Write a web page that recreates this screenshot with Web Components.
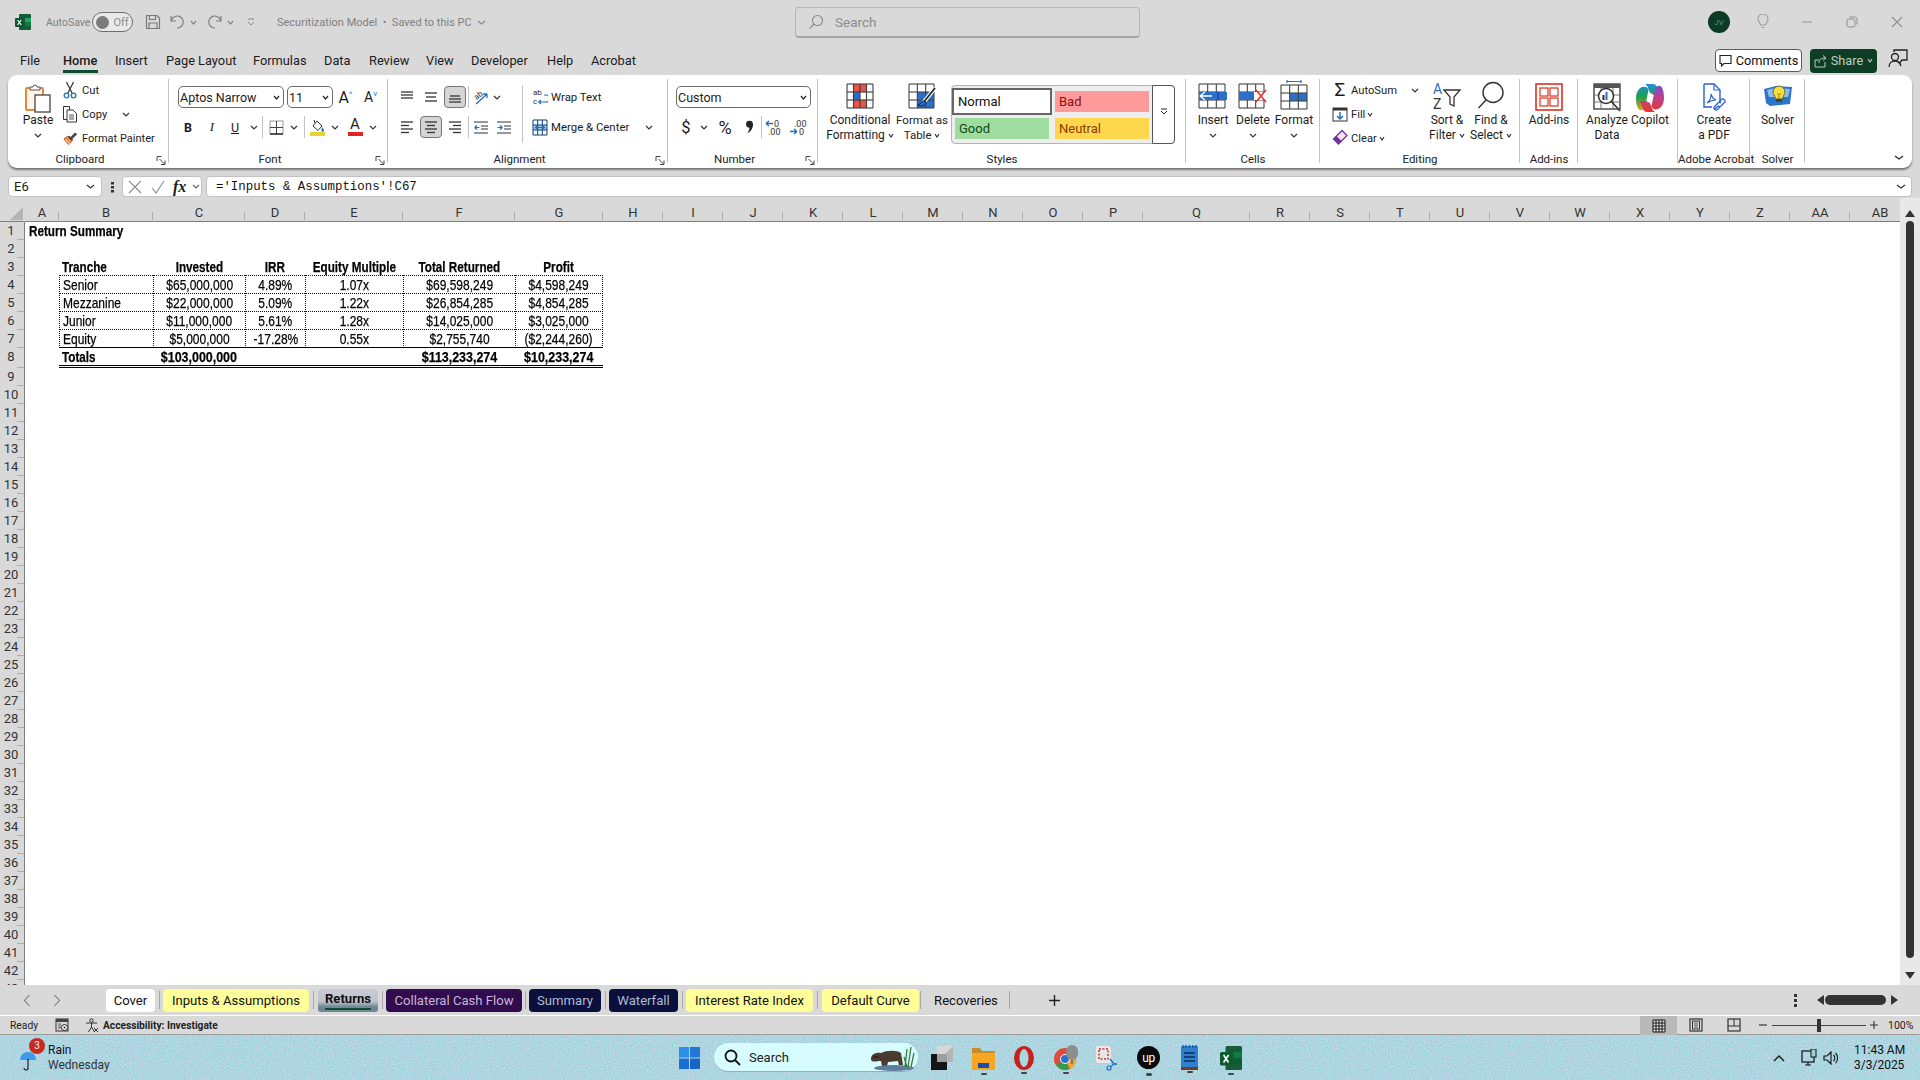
<!DOCTYPE html>
<html lang="en"><head><meta charset="utf-8"><title>Securitization Model</title>
<style>
html,body{margin:0;padding:0;height:1080px;width:1920px;overflow:hidden;background:#d9d9d9;font-family:Roboto,"Liberation Sans",sans-serif;}
body{display:flex;flex-direction:column}
</style></head><body>
<x-titlebar></x-titlebar>
<x-menubar></x-menubar>
<x-ribbon></x-ribbon>
<x-formula></x-formula>
<x-sheet></x-sheet>
<x-sheettabs></x-sheettabs>
<x-status></x-status>
<x-taskbar></x-taskbar>
<script>
const sv=(w,h,inner,attr='')=>`<svg width="${w}" height="${h}" viewBox="0 0 ${w} ${h}" ${attr}>${inner}</svg>`;
const chev=(c='#333',w=8)=>sv(w,5,`<path d="M1 1l${w/2-1} 3 ${w/2-1}-3" fill="none" stroke="${c}" stroke-width="1.2"/>`,'class="chv"');
const excelIcon=(s=16)=>`<svg width="${s}" height="${s}" viewBox="0 0 16 16"><rect x="4" y="0" width="12" height="16" rx="1" fill="#185c37"/><rect x="10" y="4" width="6" height="4" fill="#21a366"/><rect x="10" y="8" width="6" height="4" fill="#107c41"/><rect x="0" y="4" width="9" height="9" rx="1" fill="#0b5a30"/><path d="M2.6 6l3.6 5M6.2 6l-3.6 5" stroke="#fff" stroke-width="1.2"/></svg>`;
function def(name,css,html,extra){
  customElements.define(name,class extends HTMLElement{
    constructor(){super();const r=this.attachShadow({mode:'open'});
      r.innerHTML=`<style>${css}</style>${typeof html==='function'?html(this):html}`;}
    connectedCallback(){ if(extra) extra(this); }
  });
}

/* ---------- title bar ---------- */
def('x-titlebar',`
:host{display:flex;align-items:center;height:44px;flex:none;color:#808080;font-size:12px}
.i{display:flex;align-items:center;justify-content:center;flex:none}
.tog{width:41px;height:20px;box-sizing:border-box;border:1.5px solid #6e6e6e;border-radius:10px;background:#e9e9e9;display:flex;align-items:center;padding:0 3px;gap:4px;font-size:11px;color:#8a8a8a}
.tog b{width:13px;height:13px;border-radius:50%;background:#7b7b7b;flex:none}
.search{width:345px;height:31px;flex:none;box-sizing:border-box;border:1px solid #b5b5b5;border-bottom:2px solid #a5a5a5;border-radius:4px;display:flex;align-items:center;padding-left:12px;gap:11px;color:#8b8b8b;font-size:13.5px}
.av{width:22px;height:22px;border-radius:50%;background:#0b3b24;color:#4d9b6e;font-size:8px;display:flex;align-items:center;justify-content:center}
`,`
<span class="i" style="margin-left:15px;width:16px">${excelIcon()}</span>
<span style="margin-left:15px;width:46px;font-size:10.5px;flex:none">AutoSave</span>
<span class="i tog"><b></b>Off</span>
<span class="i" style="margin-left:12px;width:16px">${sv(16,16,`<path d="M1.5 1.5h10.5l2.5 2.5v10.5h-13z" fill="none" stroke="#7a7a7a" stroke-width="1.2"/><path d="M4.5 1.5v4h6v-4M4 14.5v-5.5h8v5.500" fill="none" stroke="#7a7a7a" stroke-width="1.2"/>`)}</span>
<span class="i" style="margin-left:8px;width:16px">${sv(16,16,`<path d="M2 2v5h5M2.4 6.6A6 6 0 1 1 8 14" fill="none" stroke="#7f7f7f" stroke-width="1.2"/>`)}</span>
<span class="i" style="margin-left:3px;width:10px">${chev('#888',7)}</span>
<span class="i" style="margin-left:9px;width:16px">${sv(16,16,`<path d="M14 2v5h-5M13.6 6.6A6 6 0 1 0 8 14" fill="none" stroke="#7f7f7f" stroke-width="1.2"/>`)}</span>
<span class="i" style="margin-left:2px;width:10px">${chev('#888',7)}</span>
<span class="i" style="margin-left:11px;width:10px">${sv(8,8,`<path d="M1 1h6M1 4l3 3 3-3" fill="none" stroke="#888" stroke-width="1"/>`)}</span>
<span style="margin-left:21px;width:199px;white-space:nowrap;font-size:11px;flex:none">Securitization Model &nbsp;•&nbsp; Saved to this PC</span>
<span class="i" style="width:10px">${chev('#888',9)}</span>
<span style="width:309px;flex:none"></span>
<span class="search">${sv(16,16,`<circle cx="9.5" cy="6.5" r="5" fill="none" stroke="#8a8a8a" stroke-width="1.1"/><path d="M6 10l-4.5 4.5" stroke="#8a8a8a" stroke-width="1.1"/>`)}<span>Search</span></span>
<span style="width:568px;flex:none"></span>
<span class="i av">JV</span>
<span class="i" style="margin-left:26px;width:14px">${sv(12,16,`<path d="M3.5 11c0-2-2.5-3-2.5-6a5 5 0 0 1 10 0c0 3-2.500 4-2.500 6zM4.500 13.500h3" fill="none" stroke="#a0a0a0" stroke-width="1.100"/>`)}</span>
<span class="i" style="margin-left:30px;width:14px">${sv(12,2,`<path d="M1 1h10" stroke="#a0a0a0" stroke-width="1.200"/>`)}</span>
<span class="i" style="margin-left:31px;width:14px">${sv(12,12,`<rect x="1" y="3" width="8" height="8" rx="2" fill="none" stroke="#8f8f8f"/><path d="M3.500 1h5a2.500 2.500 0 0 1 2.500 2.500v5" fill="none" stroke="#8f8f8f"/>`)}</span>
<span class="i" style="margin-left:31px;width:14px">${sv(12,12,`<path d="M1 1l10 10M11 1l-10 10" stroke="#8f8f8f" stroke-width="1.100"/>`)}</span>
`);

/* ---------- menu bar ---------- */
const menu=[['File',43],['Home',52],['Insert',51],['Page Layout',87],['Formulas',71],['Data',45],['Review',57],['View',45],['Developer',76],['Help',44],['Acrobat',60]];
def('x-menubar',`
:host{display:flex;align-items:center;height:31px;flex:none;padding-left:20px;padding-top:2px;font-size:12.800px;color:#1c1c1c;box-sizing:border-box}
span.t{flex:none;white-space:nowrap;line-height:18px;position:relative}
.on{font-weight:500}
.on::after{content:"";position:absolute;left:0;width:35px;bottom:-3px;height:2.500px;background:#0e4b31}
.cm{margin-left:1064px;width:87px;height:23px;box-sizing:border-box;border:1px solid #5c5c5c;border-radius:4px;background:#fff;display:flex;align-items:center;justify-content:center;gap:4px;color:#111;flex:none}
.sh{margin-left:8px;width:67px;height:24px;box-sizing:border-box;border-radius:4px;background:#0d3d25;color:#b9cdbd;display:flex;align-items:center;justify-content:center;gap:4px;flex:none}
`,`
${menu.map(([t,w])=>`<span class="t ${t==='Home'?'on':''}" style="width:${w}px">${t}</span>`).join('')}
<span class="cm">${sv(13,13,`<path d="M1 1.500h11v8H5l-2.500 2.500V9.500H1z" fill="none" stroke="#222" stroke-width="1.100"/>`)}Comments</span>
<span class="sh">${sv(13,14,`<path d="M1 6h4M1 6v7h10V8M5 9c0-4 3-5 6-5M9 1.500l3 2.500-3 2.500" fill="none" stroke="#b9cdbd"/>`)}Share ${chev('#b9cdbd',6)}</span>
<span style="margin-left:11px;flex:none">${sv(20,20,`<circle cx="7" cy="8" r="3.500" fill="none" stroke="#222" stroke-width="1.300"/><path d="M1 18c0-4 3-6 6-6s5 2 6 5" fill="none" stroke="#222" stroke-width="1.300"/><path d="M6 3V1h13v10h-5l-2.500 3" fill="none" stroke="#222" stroke-width="1.300"/>`)}</span>
`);

/* ---------- ribbon group + big button ---------- */
def('x-group',`
:host{display:flex;flex-direction:column;height:93px;box-sizing:border-box;padding-top:3px;flex:none;background:linear-gradient(#c4c4c4,#c4c4c4) right 4px/1.500px 84px no-repeat}
.c{height:73px;display:flex;flex:none}
.l{height:15px;display:flex;align-items:center;font-size:11.500px;color:#222}
.l span{flex:1;text-align:center;white-space:nowrap}
.la{display:none;width:10px;margin-right:3px;flex:none;margin-top:3px}
:host([launch]) .la{display:block}
:host([launch]) .l span{padding-right:4px}
`,h=>`<div class="c"><slot></slot></div><div class="l"><span>${h.getAttribute('label')||''}</span><svg class="la" width="9" height="9" viewBox="0 0 9 9"><path d="M.5 5V.5H5M3 3l5 5M8.500 4.500v4h-4" fill="none" stroke="#444"/></svg></div>`);
def('x-big',`
:host{display:flex;flex-direction:column;align-items:center;flex:none;margin-top:5px;font-size:12px;line-height:15px;color:#1c1c1c;text-align:center;white-space:nowrap}
.ic{height:30px;display:flex;align-items:flex-start;justify-content:center}
`,`<div class="ic"><slot name="icon"></slot></div><div><slot></slot></div>`);

/* ---------- ribbon ---------- */
const bl=(ys,col='#333')=>sv(16,16,ys.map(([y,x1,x2])=>`<path d="M${x1} ${y}H${x2}" stroke="${col}" stroke-width="1.300"/>`).join(''));
const grid=(w,h,cols,rows,fills='',c='#3c3c3c')=>{let s=fills;for(let i=0;i<=cols;i++){const x=1+i*(w-2)/cols;s+=`<path d="M${x} 1V${h-1}" stroke="${c}" stroke-width="1.100"/>`}for(let j=0;j<=rows;j++){const y=1+j*(h-2)/rows;s+=`<path d="M1 ${y}H${w-1}" stroke="${c}" stroke-width="1.100"/>`}return s};
const ICON={
paste:`<svg slot="icon" width="28" height="30" viewBox="0 0 28 30"><rect x="2" y="5" width="17" height="22" rx="1" fill="#fff6e8" stroke="#e5873a" stroke-width="2"/><path d="M6 7V4h3a2 2 0 0 1 4 0h3v3z" fill="#fff" stroke="#555"/><rect x="11" y="12" width="15" height="17" fill="#fff" stroke="#444" stroke-width="1.300"/></svg>`,
cut:sv(14,18,`<path d="M3.500 1l6 12M10.500 1l-6 12" stroke="#333" stroke-width="1.200"/><circle cx="3.500" cy="14.500" r="2.300" fill="none" stroke="#1f6fc0" stroke-width="1.300"/><circle cx="10.500" cy="14.500" r="2.300" fill="none" stroke="#1f6fc0" stroke-width="1.300"/>`),
copy:sv(16,18,`<path d="M1.500 1.500h6v13h-6z" fill="#fff" stroke="#333"/><path d="M5 5h6l3.500 3.500v8.500H5z" fill="#fff" stroke="#333"/><path d="M7 10h5M7 12h5M7 14h5" stroke="#555"/>`),
painter:sv(17,17,`<path d="M2 9l5 6 4-4-5-5z" fill="#ef8f3a" stroke="#c9501f"/><path d="M4 10l4 4" stroke="#fff"/><path d="M9 7l5-5 2 2-5 5z" fill="#444"/><path d="M7 6l4 4" stroke="#222" stroke-width="1.500"/>`),
borders:sv(15,15,`<rect x="1" y="1" width="13" height="13" fill="none" stroke="#9a9a9a"/><path d="M7.500 1v13M1 7.500h13" stroke="#444"/><path d="M1 14h13" stroke="#222" stroke-width="1.400"/>`),
fill:sv(17,18,`<path d="M4 8l4-5 5 5-4 4.500z" fill="#fff" stroke="#333"/><path d="M6 5l-1-3" stroke="#333"/><path d="M13 9c1 1.500 2 2.500 2 3.500a1.300 1.300 0 0 1-2.600 0c0-1 .600-2 .600-3.500z" fill="#1f6fc0"/><rect x="1" y="14" width="15" height="4" fill="#e4d334"/>`),
fcolor:`<span style="display:flex;flex-direction:column;align-items:center;font-size:15px;line-height:13px;color:#222;width:16px">A<i style="display:block;width:15px;height:4px;background:#e32222;margin-top:1px"></i></span>`,
orient:sv(17,17,`<text x="2" y="9" font-family="Roboto" font-size="8" fill="#333" transform="rotate(-40 6 8)">ab</text><path d="M3 15L14 5M14 5h-4M14 5v4" stroke="#1f6fc0" stroke-width="1.300" fill="none"/>`),
wrap:sv(15,18,`<text x="0" y="7" font-family="Roboto" font-size="8" fill="#333">ab</text><text x="0" y="16" font-family="Roboto" font-size="8" fill="#333">c</text><path d="M11 7h2a1.500 1.500 0 0 1 0 7H6M8 12l-2.200 2 2.200 2" fill="none" stroke="#1f6fc0" stroke-width="1.200"/>`),
merge:sv(16,17,grid(16,17,3,3,`<rect x="1" y="6" width="14" height="5" fill="#a7cbed"/>`,'#1c4f86')+`<path d="M3 8.500h10M3 8.500l2-1.500M3 8.500l2 1.500M13 8.500l-2-1.500M13 8.500l-2 1.500" stroke="#1f6fc0" fill="none"/>`),
outd:sv(16,15,`<path d="M1 2h14M8 6h7M8 9h7M1 13h14" stroke="#333"/><path d="M6.500 7.500H1.500M1.500 7.500l2.500-2M1.500 7.500l2.500 2" stroke="#1f6fc0" stroke-width="1.200" fill="none"/>`),
ind:sv(16,15,`<path d="M1 2h14M8 6h7M8 9h7M1 13h14" stroke="#333"/><path d="M1.500 7.500h5M6.500 7.500L4 5.500M6.500 7.500L4 9.500" stroke="#1f6fc0" stroke-width="1.200" fill="none"/>`),
incd:sv(19,17,`<path d="M1 4.500h7M1 4.500l3-2.500M1 4.500l3 2.500" stroke="#1f6fc0" stroke-width="1.300" fill="none"/><text x="9" y="8" font-family="Roboto" font-size="9" fill="#333">0</text><text x="3" y="16" font-family="Roboto" font-size="9" fill="#333">.00</text>`),
decd:sv(19,17,`<text x="5" y="8" font-family="Roboto" font-size="9" fill="#333">.00</text><path d="M1 12.500h7M8 12.500l-3-2.500M8 12.500l-3 2.500" stroke="#1f6fc0" stroke-width="1.300" fill="none"/><text x="10" y="16" font-family="Roboto" font-size="9" fill="#333">0</text>`),
comma:sv(9,14,`<circle cx="4.500" cy="4.200" r="3.400" fill="#222"/><path d="M7.900 4.200c0 4-2 7.500-5.500 8.800 1.700-2.200 2.300-4.500 2-6.500z" fill="#222"/>`),
cf:`<svg slot="icon" width="28" height="26" viewBox="0 0 28 26">${grid(28,26,4,3,`<rect x="7" y="1" width="14" height="8" fill="#e8544a"/><rect x="7" y="9" width="7" height="8" fill="#2a6fc9"/><rect x="7" y="17" width="14" height="8" fill="#e8544a"/>`)}</svg>`,
fat:`<svg slot="icon" width="28" height="28" viewBox="0 0 28 28">${grid(27,26,3,3,`<rect x="9" y="9" width="17" height="16" fill="#2a6fc9"/>`,'#444')}<path d="M27 5L15 20" stroke="#fff" stroke-width="4"/><path d="M27 5L15 20" stroke="#333" stroke-width="2"/><path d="M16 18c-3 0-3 3-6 4 3 2 7 1 8-3z" fill="#2a6fc9" stroke="#123"/></svg>`,
insert:`<svg slot="icon" width="30" height="26" viewBox="0 0 30 26">${grid(28,26,3,3,`<rect x="9" y="9" width="20" height="8" fill="#2a6fc9"/>`,'#444')}<rect x="1" y="9" width="28" height="8" fill="#2a6fc9"/><path d="M14 13H2M2 13l5-4M2 13l5 4" stroke="#fff" stroke-width="1.500" fill="none"/><path d="M20 9v8" stroke="#123c70"/></svg>`,
del:`<svg slot="icon" width="30" height="26" viewBox="0 0 30 26">${grid(27,26,3,3,'','#444')}<rect x="1" y="9" width="15" height="8" fill="#2a6fc9"/><rect x="16" y="9" width="12" height="8" fill="#fff"/><path d="M18 7l10 12M28 7L18 19" stroke="#e5352b" stroke-width="1.600"/></svg>`,
fmt:`<svg slot="icon" width="28" height="30" viewBox="0 0 28 30"><path d="M7 1.500h14M7 0v3M21 0v3" stroke="#2a6fc9" stroke-width="1.200"/><g transform="translate(0 4)">${grid(28,26,3,3,`<rect x="10" y="9" width="17" height="8" fill="#2a6fc9"/>`,'#444')}</g></svg>`,
fillb:sv(16,15,`<rect x="1" y="1" width="14" height="13" fill="#fff" stroke="#333"/><rect x="1" y="1" width="14" height="2.500" fill="#333"/><path d="M8 5v7M5 9l3 3 3-3" stroke="#1f6fc0" stroke-width="1.500" fill="none"/>`),
clear:sv(16,18,`<path d="M1.500 10L10 1.500l5 5L6.500 15z" fill="#f0e4f5" stroke="#70339a" stroke-width="1.300"/><path d="M1.500 10l5 5 3-3-5-5z" fill="#70339a"/>`),
sort:`<svg slot="icon" width="29" height="30" viewBox="0 0 29 30"><text x="0" y="13" font-family="Roboto" font-size="14" fill="#1f6fc0">A</text><text x="0" y="28" font-family="Roboto" font-size="14" fill="#333">Z</text><path d="M11 9h16l-6 7v9l-4-2v-7z" fill="none" stroke="#333" stroke-width="1.300"/></svg>`,
find:`<svg slot="icon" width="28" height="28" viewBox="0 0 28 28"><circle cx="16" cy="11.500" r="10" fill="none" stroke="#333" stroke-width="1.400"/><path d="M9 19L1.500 27" stroke="#333" stroke-width="1.400"/></svg>`,
addin:`<svg slot="icon" width="28" height="28" viewBox="0 0 28 28"><rect x="1" y="1" width="26" height="26" fill="none" stroke="#d8341f" stroke-width="1.600"/><rect x="5" y="5" width="8" height="8" fill="none" stroke="#d8341f" stroke-width="1.200"/><rect x="15" y="5" width="8" height="8" fill="none" stroke="#d8341f" stroke-width="1.200"/><rect x="5" y="15" width="8" height="8" fill="none" stroke="#d8341f" stroke-width="1.200"/><rect x="15" y="15" width="8" height="8" fill="none" stroke="#d8341f" stroke-width="1.200"/></svg>`,
analyze:`<svg slot="icon" width="28" height="29" viewBox="0 0 28 29"><rect x="1" y="1" width="26" height="25" fill="#fff" stroke="#333" stroke-width="1.300"/><rect x="1" y="1" width="26" height="4" fill="#555"/><path d="M1 12h26M1 19h26M8 5v21M20 5v21" stroke="#777"/><circle cx="13" cy="13" r="7.500" fill="#fff" stroke="#333" stroke-width="1.500"/><rect x="9.500" y="12" width="2" height="5" fill="#333"/><rect x="12.500" y="9" width="2" height="8" fill="#2a6fc9"/><path d="M18 18l9 10" stroke="#333" stroke-width="1.600"/></svg>`,
copilot:`<svg slot="icon" width="30" height="30" viewBox="0 0 30 30"><defs><linearGradient id="cp1" x1="0" y1="0" x2="0" y2="1"><stop offset="0" stop-color="#1f8fe0"/><stop offset=".5" stop-color="#1ea04a"/><stop offset="1" stop-color="#e6a01e"/></linearGradient><linearGradient id="cp2" x1="0" y1="0" x2="0" y2="1"><stop offset="0" stop-color="#7a4fd0"/><stop offset=".5" stop-color="#c24080"/><stop offset="1" stop-color="#e8372b"/></linearGradient></defs><path d="M10 1h8c2 0 3 1 4 3l3 8h-9l-3-7c-.400-1-1-3-3-4zM1 15c0-5 2-9 6-11 3-1 6 0 6.500 3L10 24c-.500 2-3 4-5 3C2 26 1 20 1 15z" fill="url(#cp1)"/><path d="M29 15c0 5-2 9-6 11-3 1-6 0-6.500-3L20 6c.500-2 3-4 5-3 3 1 4 7 4 12zM20 29h-8c-2 0-3-1-4-3l-3-8h9l3 7c.400 1 1 3 3 4z" fill="url(#cp2)"/><path d="M14 10l4 1-2 9-4-1z" fill="#fff"/></svg>`,
pdf:`<svg slot="icon" width="24" height="30" viewBox="0 0 24 30"><path d="M2 1h10l6 6v12M2 1v23h8" fill="none" stroke="#2a62c9" stroke-width="1.400"/><path d="M12 1v6h6" fill="none" stroke="#2a62c9" stroke-width="1.100"/><path d="M5 20c3-2 4-6 4-9 1 3 2 5 5 6-3 0-6 1-9 3z" fill="none" stroke="#2a62c9" stroke-width="1.100"/><path d="M13 26l3-3M17 19l3-3a2.500 2.500 0 0 1 3 3l-4 4a2.500 2.500 0 0 1-3 0M18 24l-3 3a2.500 2.500 0 0 1-3-3l4-4a2.500 2.500 0 0 1 3 0" fill="none" stroke="#2a62c9" stroke-width="1.300"/></svg>`,
solver:`<svg slot="icon" width="30" height="26" viewBox="0 0 30 26"><path d="M1 6l12-3 16 1-2 17-20 2-4-3z" fill="#2b74c9"/><path d="M4 7l8-2 15 1-2 8H6z" fill="#8fbdea"/><path d="M16 3a6 6 0 0 1 4 10.500v2.500h-8v-2.500A6 6 0 0 1 16 3z" fill="#f7df3b" stroke="#444" stroke-width=".8"/><path d="M14 10l2 2 2-2M16 12v4" fill="none" stroke="#7a6a10" stroke-width=".8"/><rect x="13" y="16" width="6" height="3" fill="#444"/></svg>`
};
const c=(w,inner='',cls='',ml=0)=>`<span class="c ${cls}" style="width:${w}px${ml?`;margin-left:${ml}px`:''}">${inner}</span>`;
const dark=`<span class="vs"></span>`;
const lower=(t,n=2)=>`<span style="position:relative;top:${n}px;display:block">${t}</span>`;
def('x-ribbon',`
:host{display:flex;height:93px;flex:none;margin:0 8px;width:1904px;box-sizing:border-box;background:#fff;border-radius:9px;box-shadow:0 2px 2px rgba(0,0,0,.45);font-size:12px;color:#1c1c1c}
.stack{display:flex;flex-direction:column;flex:none}
.r24{display:flex;align-items:center;height:24px;white-space:nowrap;font-size:11.200px}
.c{display:flex;align-items:center;justify-content:center;flex:none;height:22px}
.chv{display:inline-block;vertical-align:middle}
.two{display:flex;flex-direction:column;gap:8px;margin-top:8px;flex:none}
.r22{display:flex;align-items:center;height:22px;flex:none;white-space:nowrap;font-size:11.400px}
.sel{width:22px!important;height:22px;margin:0 1px;background:#d5d5d5;border:1px solid #777;border-radius:4px;box-sizing:border-box}
.dd{height:22px;box-sizing:border-box;border:1px solid #6c6c6c;border-radius:5px;display:flex;align-items:center;justify-content:space-between;padding:0 3px 0 1px;background:#fff;flex:none;font-size:12.500px}
.vs{width:1px;height:22px;background:#c4c4c4;flex:none}
.sym{font-size:16.500px}
.gal{width:224px;height:59px;margin-top:7px;box-sizing:border-box;border:1px solid #b4b4b4;border-radius:4px;display:flex;flex:none;background:#eee}
.gg{display:grid;grid-template-columns:103px 97px;grid-template-rows:29px 27px;width:201px;padding-top:1px;font-size:13px;box-sizing:border-box}
.gg span{display:flex;align-items:center;padding-left:4px;box-sizing:border-box}
.n{border:2px solid #666;background:#fff;color:#111;margin:1px 3px 1px 0}
.b{background:#ff9a9a;color:#8a1010;margin:4px 3px 4px 0}
.g{background:#9edc9f;color:#0c4d12;margin:2px 6px 4px 3px}
.nt{background:#ffd74f;color:#8a3c00;margin:2px 3px 4px 0}
.sc{flex:1;border:1px solid #555;border-radius:0 4px 4px 0;margin:-1px;background:#fff;display:flex;justify-content:center;padding-top:22px;box-sizing:content-box}
.col{flex:1;display:flex;align-items:flex-end;justify-content:flex-end;padding:0 8px 8px 0}
`,`
<x-group label="Clipboard" launch style="width:161px">
  <x-big style="width:40px;margin-left:10px">${ICON.paste}Paste<br>${chev()}</x-big>
  <div class="stack" style="margin-left:4px">
    <div class="r24">${c(16,ICON.cut,'',0)}<span style="margin-left:4px">Cut</span></div>
    <div class="r24">${c(16,ICON.copy)}<span style="margin-left:4px;width:38px">Copy</span>${c(12,chev())}</div>
    <div class="r24">${c(16,ICON.painter)}<span style="margin-left:4px;font-size:11px">Format Painter</span></div>
  </div>
</x-group>
<x-group label="Font" launch style="width:219px">
  <div class="two" style="margin-left:9px">
    <div class="r22"><span class="dd" style="width:106px">Aptos Narrow ${chev('#222',7)}</span><span class="dd" style="width:46px;margin-left:3px">11 ${chev('#222',7)}</span>
      ${c(25,`<span style="font-size:16px">A<sup style="font-size:8px;color:#1f6fc0">^</sup></span>`)}${c(25,`<span style="font-size:14px">A<sup style="font-size:8px;color:#1f6fc0">v</sup></span>`)}</div>
    <div class="r22">${c(20,'<b style="font-size:12.500px">B</b>')}${c(20,'<i style="font-family:Liberation Serif;font-size:13px">I</i>','',4)}${c(20,'<u style="font-size:12.500px">U</u>','',3)}${c(16,chev(),'',1)}${dark}${c(20,ICON.borders,'',3)}${c(16,chev())}<span class="vs" style="margin-left:2px"></span>${c(20,ICON.fill,'',2)}${c(16,chev())}${c(20,ICON.fcolor,'',2)}${c(16,chev())}</div>
  </div>
</x-group>
<x-group label="Alignment" launch style="width:280px">
  <div class="two" style="margin-left:7px;width:127px">
    <div class="r22">${c(24,bl([[3,2,14],[6,2,14],[9,2,14]]))}${c(24,bl([[4,2,14],[8,3,13],[12,2,14]]))}${c(24,bl([[7,3,13],[10,2,14],[13,2,14]]),'sel')}<span class="vs" style="margin-left:1px"></span>${c(24,ICON.orient)}${c(8,chev(),'',0)}</div>
    <div class="r22">${c(24,bl([[3,2,14],[6.500,2,10],[10,2,14],[13.500,2,10]]))}${c(24,bl([[3,2,14],[6.500,4,12],[10,2,14],[13.500,4,12]]),'sel')}${c(24,bl([[3,2,14],[6.500,6,14],[10,2,14],[13.500,6,14]]))}<span class="vs" style="margin-left:1px"></span>${c(24,ICON.outd)}${c(22,ICON.ind)}</div>
  </div>
  <div style="width:1px;height:58px;background:#c4c4c4;margin-top:7px;flex:none"></div>
  <div class="two" style="margin-left:9px">
    <div class="r22">${c(16,ICON.wrap)}<span style="margin-left:3px">Wrap Text</span></div>
    <div class="r22">${c(16,ICON.merge)}<span style="margin-left:3px;width:92px">Merge &amp; Center</span>${c(12,chev())}</div>
  </div>
</x-group>
<x-group label="Number" launch style="width:150px">
  <div class="two" style="margin-left:8px">
    <div class="r22"><span class="dd" style="width:135px">Custom ${chev('#222',7)}</span></div>
    <div class="r22">${c(20,'<span class="sym">$</span>')}${c(16,chev())}${c(26,'<span class="sym" style="font-size:18px">%</span>')}${c(22,ICON.comma)}<span class="vs" style="margin-left:1px"></span>${c(24,ICON.incd)}${c(24,ICON.decd)}</div>
  </div>
</x-group>
<x-group label="Styles" style="width:368px">
  <x-big style="width:62px;margin-left:11px">${ICON.cf}Conditional<br>Formatting ${chev('#333',6)}</x-big>
  <x-big style="width:58px;margin-left:2px;font-size:11.500px">${ICON.fat}Format as<br>Table ${chev('#333',6)}</x-big>
  <div class="gal"><div class="gg"><span class="n">Normal</span><span class="b">Bad</span><span class="g">Good</span><span class="nt">Neutral</span></div>
  <div class="sc">${sv(8,7,`<path d="M1 1h6M1 3l3 3 3-3" fill="none" stroke="#222"/>`)}</div></div>
</x-group>
<x-group label="Cells" style="width:134px">
  <x-big style="width:40px;margin-left:7px">${ICON.insert}Insert<br>${chev()}</x-big>
  <x-big style="width:40px">${ICON.del}Delete<br>${chev()}</x-big>
  <x-big style="width:42px;margin-top:2px">${ICON.fmt}${lower(`Format<br>${chev()}`,3)}</x-big>
</x-group>
<x-group label="Editing" style="width:200px">
  <div class="stack" style="margin-left:10px;width:95px">
    <div class="r24">${c(20,'<span style="font-size:19px;line-height:20px">Σ</span>')}<span style="margin-left:1px;width:58px">AutoSum</span>${c(12,chev())}</div>
    <div class="r24">${c(20,ICON.fillb)}<span style="margin-left:1px;width:14px">Fill</span>${c(10,chev('#333',6))}</div>
    <div class="r24">${c(20,ICON.clear)}<span style="margin-left:1px;width:26px">Clear</span>${c(10,chev('#333',6))}</div>
  </div>
  <x-big style="width:44px;margin-top:3px">${ICON.sort}${lower(`Sort &amp;<br>Filter ${chev('#333',6)}`)}</x-big>
  <x-big style="width:44px;margin-top:3px">${ICON.find}${lower(`Find &amp;<br>Select ${chev('#333',6)}`)}</x-big>
</x-group>
<x-group label="Add-ins" style="width:58px"><x-big style="width:58px">${ICON.addin}Add-ins</x-big></x-group>
<x-group style="width:100px">
  <x-big style="width:50px;margin-left:4px">${ICON.analyze}Analyze<br>Data</x-big>
  <x-big style="width:36px">${ICON.copilot}Copilot</x-big>
</x-group>
<x-group label="Adobe Acrobat" style="width:72px"><x-big style="width:72px">${ICON.pdf}Create<br>a PDF</x-big></x-group>
<x-group label="Solver" style="width:55px"><x-big style="width:55px">${ICON.solver}Solver</x-big></x-group>
<div class="col">${chev('#222',10)}</div>
`);

/* ---------- formula bar ---------- */
def('x-formula',`
:host{display:flex;align-items:center;height:21px;margin:8px 8px 1px;flex:none;width:1904px;font-size:13px;color:#1c1c1c}
.b{height:21px;box-sizing:border-box;background:#fff;border:1px solid #c2c2c2;border-radius:4px;display:flex;align-items:center;flex:none}
.f{font-family:"Liberation Mono",monospace;font-size:12.400px;color:#111;white-space:pre;padding-left:9px;flex:1}
`,`
<div class="b" style="width:94px;padding:0 6px 0 5px;justify-content:space-between">E6 ${chev('#333',9)}</div>
<div style="width:20px;display:flex;justify-content:center;flex:none">${sv(3,12,`<rect y="1" width="3" height="2.500" fill="#333"/><rect y="5" width="3" height="2.500" fill="#333"/><rect y="9" width="3" height="2.500" fill="#333"/>`)}</div>
<div class="b" style="width:80px;gap:0;padding-left:5px">
  ${sv(14,14,`<path d="M1 1l12 12M13 1L1 13" stroke="#8c8c8c" stroke-width="1.100"/>`)}
  <span style="margin-left:9px;display:flex">${sv(14,14,`<path d="M1 8l4 5L13 1" fill="none" stroke="#8c8c8c" stroke-width="1.100"/>`)}</span>
  <i style="font-family:'Liberation Serif';font-size:16px;font-weight:bold;margin-left:8px;width:19px;text-align:left">fx</i>${chev('#666',8)}
</div>
<div class="b f" style="margin-left:4px;flex:1;justify-content:space-between;padding-right:5px"><span>='Inputs &amp; Assumptions'!C67</span>${chev('#333',10)}</div>
`);

/* ---------- sheet ---------- */
const cols=['A','B','C','D','E','F','G','H','I','J','K','L','M','N','O','P','Q','R','S','T','U','V','W','X','Y','Z','AA','AB'];
const widths=[34,94,92,60,98,112,88,60,60,60,60,60,60,60,60,60,107,60,60,60,60,60,60,60,60,60,60,60];
const data=[
['Senior','$65,000,000','4.89%','1.07x','$69,598,249','$4,598,249'],
['Mezzanine','$22,000,000','5.09%','1.22x','$26,854,285','$4,854,285'],
['Junior','$11,000,000','5.61%','1.28x','$14,025,000','$3,025,000'],
['Equity','$5,000,000','-17.28%','0.55x','$2,755,740','($2,244,260)']];
const heads=['Tranche','Invested','IRR','Equity Multiple','Total Returned','Profit'];
const totals=['Totals','$103,000,000','','','$113,233,274','$10,233,274'];
function sheetHtml(){
 let h=`<div class="corner">${sv(15,15,`<path d="M14 1v13H1z" fill="#b3b3b3"/>`)}</div>`;
 cols.forEach((n,i)=>h+=`<div class="ch" style="grid-column:${i+2};grid-row:1">${n}</div>`);
 for(let r=1;r<=43;r++)h+=`<div class="rh" style="grid-column:1;grid-row:${r+1}">${r}</div>`;
 h+=`<div class="cell bold over" style="grid-column:2;grid-row:2"><span class="s">Return Summary</span></div>`;
 const put=(row,col,t,cls)=>`<div class="cell ${cls} ${col===0?'lft':'ctr'}" style="grid-column:${col+3};grid-row:${row+1}"><span class="s ${/^\$/.test(t)&&cls.includes('bold')?'bn':''}">${t}</span></div>`;
 heads.forEach((t,c)=>h+=put(3,c,t,'bold'));
 data.forEach((rw,i)=>rw.forEach((t,c)=>h+=put(4+i,c,t,'dot'+(c===5?' endc':''))));
 totals.forEach((t,c)=>h+=put(8,c,t,'bold tot'));
 return `<div class="grid">${h}</div><div class="sb"><span>${sv(10,7,`<path d="M5 0l5 7H0z" fill="#333"/>`)}</span><i></i><span>${sv(10,7,`<path d="M5 7l5-7H0z" fill="#333"/>`)}</span></div>`;
}
def('x-sheet',`
:host{display:flex;height:787px;flex:none;background:#fff;overflow:hidden}
.grid{flex:none;width:1900px;height:787px;overflow:hidden;display:grid;grid-template-columns:25px ${widths.map(w=>w+'px').join(' ')};grid-template-rows:24px repeat(7,18px) 20px repeat(35,18px);font-family:"Liberation Sans",sans-serif;font-size:15px;color:#000}
.corner{grid-column:1;grid-row:1;background:#d9d9d9;border-bottom:1px solid #7f7f7f;border-right:1px solid #d9d9d9;display:flex;align-items:flex-end;justify-content:flex-end;box-sizing:border-box}
.ch{background:#d9d9d9 linear-gradient(#adadad,#adadad) right 14px/1px 8px no-repeat;border-bottom:1px solid #7f7f7f;box-sizing:border-box;display:flex;align-items:flex-end;justify-content:center;font:13px/16px Roboto,sans-serif;color:#333}
.rh{background:#d9d9d9 linear-gradient(#adadad,#adadad) right bottom/7px 1px no-repeat;border-right:1px solid #7f7f7f;box-sizing:border-box;text-align:center;font:13px/18px Roboto,sans-serif;color:#333;padding-right:2px}
.cell{line-height:18px;white-space:nowrap;box-sizing:border-box;min-width:0}
.s{display:inline-block;transform:scaleX(.8);transform-origin:left center;white-space:nowrap;-webkit-text-stroke:.25px #000}
.over{padding-left:4px}
.bold .s{transform:scaleX(.78)}
.bold .s.bn{transform:scaleX(.83)}
.bold{font-weight:bold}
.lft{padding-left:3px}
.ctr{display:flex;justify-content:center}
.ctr .s{transform-origin:center center;flex:none}
.dot{border-left:1px dotted #111;border-top:1px dotted #111;margin-top:-1px;height:19px}
.endc{border-right:1px dotted #111}
.tot{border-top:1px solid #000;border-bottom:3px double #000;margin-top:-1px;height:21px;line-height:18px}
.sb{flex:1;background:#e8e8e8;display:flex;flex-direction:column;align-items:center;padding-top:10px}
.sb span{display:flex;height:10px;align-items:center}
.sb i{width:8px;height:737px;background:#333;border-radius:4px;margin:3px 0 12px}
`,sheetHtml);

/* ---------- sheet tabs ---------- */
const tabs=[['Cover',49,'#fff','#111'],['Inputs &amp; Assumptions',146,'#ffff99','#111'],['Returns',60,'',''],['Collateral Cash Flow',136,'#300c4e','#c6b4d8'],['Summary',72,'#0a0f3b','#aebbd8'],['Waterfall',69,'#0a0f3b','#aebbd8'],['Interest Rate Index',127,'#ffff99','#111'],['Default Curve',97,'#ffff99','#111'],['Recoveries',90,'','#111']];
const tabStarts=[106,163,318,386,529,609,686,822,921];
def('x-sheettabs',`
:host{display:flex;align-items:center;height:30px;flex:none;background:#d9d9d9;font-size:13.100px;border-bottom:1px solid #fff;box-sizing:content-box;margin-bottom:0}
.t{flex:none;height:23px;border-radius:4px;display:flex;align-items:center;justify-content:center;white-space:nowrap;box-sizing:border-box;position:relative}
.t.ret{font-weight:700;color:#111;background:linear-gradient(#c9ccd6 0,#bfc2ca 55%,#6f8893 78%,#6f8893 100%);align-items:flex-start;line-height:18px;border-radius:3px;padding-top:1px}
.t.ret::after{content:"";position:absolute;left:7px;right:7px;bottom:2px;height:2px;background:#0f4a32}
.sep{flex:none;width:1px;height:18px;background:#a8a8a8}
`,()=>{
 let h=`<span style="margin-left:23px;flex:none;display:flex">${sv(8,13,`<path d="M6.500 1L1.500 6.500l5 5.500" fill="none" stroke="#777" stroke-width="1.100"/>`)}</span><span style="margin-left:22px;flex:none;display:flex">${sv(8,13,`<path d="M1.500 1l5 5.500-5 5.500" fill="none" stroke="#777" stroke-width="1.100"/>`)}</span><span style="flex:none;width:45px"></span>`;
 let x=106;
 tabs.forEach(([n,w,bg,fg],i)=>{
  const s=tabStarts[i];
  if(s>x)h+=`<span style="flex:none;width:${s-x}px;display:flex;justify-content:center"><span class="sep"></span></span>`;
  const ret=n==='Returns';
  h+=`<span class="t ${ret?'ret':''}" style="width:${w}px;${ret?'':`background:${bg||'transparent'};color:${fg}`}">${n}</span>`;
  x=s+w;
 });
 h+=`<span class="sep" style="margin-left:-2px"></span><span style="margin-left:38px;flex:none;display:flex">${sv(13,13,`<path d="M6.500 1v11M1 6.500h11" stroke="#222" stroke-width="1.400"/>`)}</span>
 <span style="margin-left:733px;flex:none;display:flex">${sv(3,13,`<rect y="0" width="3" height="3" fill="#333"/><rect y="5" width="3" height="3" fill="#333"/><rect y="10" width="3" height="3" fill="#333"/>`)}</span>
 <span style="margin-left:20px;flex:none;display:flex">${sv(7,10,`<path d="M0 5l7-5v10z" fill="#333"/>`)}</span>
 <span style="margin-left:1px;flex:none;width:61px;height:10px;background:#333;border-radius:5px"></span>
 <span style="margin-left:5px;flex:none;display:flex">${sv(7,10,`<path d="M7 5L0 0v10z" fill="#333"/>`)}</span>`;
 return h;
});

/* ---------- status ---------- */
def('x-status',`
:host{display:flex;align-items:center;height:19px;flex:none;background:#d9d9d9;font-size:11px;color:#222;box-sizing:border-box;border-bottom:1px solid #9c9c9c}
.i{flex:none;display:flex;align-items:center;justify-content:center}
`,`
<span style="margin-left:10px;width:37px;flex:none;font-size:10.300px">Ready</span>
<span class="i" style="margin-left:8px">${sv(14,14,`<rect x="1" y="1" width="12" height="12" fill="none" stroke="#333"/><rect x="1" y="1" width="12" height="3" fill="#444"/><path d="M3 6h3M3 8h3M3 10h3" stroke="#555"/><circle cx="9.500" cy="9.500" r="3" fill="#fff" stroke="#222"/><circle cx="9.500" cy="9.500" r="1" fill="#222"/>`)}</span>
<span class="i" style="margin-left:16px">${sv(14,15,`<circle cx="6.500" cy="2.500" r="1.700" fill="none" stroke="#333"/><path d="M1 5h11M6.500 5v4l-3 5M6.500 9l3 5" fill="none" stroke="#333"/><path d="M9 10l4 4M13 10l-4 4" stroke="#333"/>`)}</span>
<b style="margin-left:4px;font-size:10.200px;white-space:nowrap;flex:none;width:113px">Accessibility: Investigate</b>
<span style="flex:none;width:1424px"></span>
<span class="i" style="width:37px;height:19px;background:#b9b9b9;margin-bottom:-1px">${sv(14,14,grid(14,14,4,4,'<rect x="1" y="1" width="12" height="12" fill="#eee"/>','#222'))}</span>
<span class="i" style="width:38px">${sv(14,14,`<rect x="1" y="1" width="12" height="12" fill="none" stroke="#333" stroke-width="1.200"/><rect x="3.500" y="3" width="7" height="8" fill="none" stroke="#333"/><path d="M5 5h4M5 7h4M5 9h4" stroke="#555"/>`)}</span>
<span class="i" style="width:38px">${sv(14,14,`<rect x="1" y="1" width="12" height="12" fill="none" stroke="#333" stroke-width="1.200"/><path d="M1 8h12M7 1v7" stroke="#333"/>`)}</span>
<span class="i" style="margin-left:3px;width:14px">${sv(8,2,`<path d="M0 1h8" stroke="#333" stroke-width="1.200"/>`)}</span>
<span style="flex:none;margin-left:2px;width:94px;height:13px;background:linear-gradient(#444,#444) center/100% 1px no-repeat;display:flex;justify-content:center"><i style="width:4px;height:13px;background:#333;display:block;margin-left:-1px"></i></span>
<span class="i" style="margin-left:3px;width:10px">${sv(8,8,`<path d="M0 4h8M4 0v8" stroke="#333" stroke-width="1.100"/>`)}</span>
<span style="margin-left:9px;flex:none;font-size:10.500px">100%</span>
`);

/* ---------- taskbar ---------- */
const tb=(x,w,inner,dot)=>({x,w,inner,dot});
const items=[
tb(679,21,sv(21,22,`<rect x="0" y="0" width="10" height="10.500" fill="#2e8fe6"/><rect x="11" y="0" width="10" height="10.500" fill="#1f78d8"/><rect x="0" y="11.500" width="10" height="10.500" fill="#1a6fd4"/><rect x="11" y="11.500" width="10" height="10.500" fill="#1465c4"/>`)),
tb(931,22,sv(22,24,`<rect x="6" y="0" width="16" height="16" fill="#d6d6d6"/><path d="M6 16L22 0v16z" fill="#b4b4b4"/><rect x="0" y="8" width="16" height="16" fill="#151515"/><rect x="6" y="8" width="10" height="8" fill="#9e9e9e"/>`)),
tb(972,23,sv(23,24,`<path d="M0 2h8l2 3h13v19H0z" fill="#c98a2c"/><rect x="0" y="7" width="23" height="17" fill="#f6a623"/><rect x="6" y="17" width="11" height="5" fill="#1a4fa0"/>`),1),
tb(1013,22,sv(22,26,`<ellipse cx="11" cy="13" rx="10" ry="12" fill="#c8201c"/><ellipse cx="11" cy="13" rx="4.500" ry="9" fill="#a4dbe0"/>`),1),
tb(1054,24,sv(24,26,`<circle cx="11" cy="14" r="11" fill="#e04a3a"/><path d="M11 14L2 20a11 11 0 0 0 13 4z" fill="#2e9e4f"/><path d="M11 14l5 10a11 11 0 0 0 5-15z" fill="#f0a830"/><circle cx="11" cy="14" r="4.500" fill="#2a6fd4" stroke="#fff"/><rect x="12" y="0" width="12" height="15" rx="6" fill="#8d8d8d"/><path d="M18 15v4" stroke="#777" stroke-width="2"/>`),1),
tb(1096,22,sv(22,26,`<rect x="0" y="1" width="15" height="17" rx="2" fill="#e8e8e8"/><rect x="3" y="4" width="9" height="10" fill="none" stroke="#c5342a" stroke-width="1.500" stroke-dasharray="2 1.500"/><path d="M14 14l4 5M14 22l4-3 3 0" stroke="#1f6fc0" stroke-width="1.300" fill="none"/><circle cx="13" cy="23" r="2" fill="none" stroke="#1f6fc0" stroke-width="1.200"/>`)),
tb(1137,23,`<span style="width:23px;height:23px;border-radius:50%;background:#0a0a0a;color:#fff;font-size:12px;display:flex;align-items:center;justify-content:center;letter-spacing:-.5px">up</span>`,1),
tb(1181,17,sv(17,28,`<rect x="0" y="2" width="17" height="23" rx="1.500" fill="#2f7fd0"/><rect x="0" y="23" width="17" height="3" fill="#7a3b1c"/><path d="M2 1v3M5 1v3M8.500 1v3M12 1v3M15 1v3" stroke="#1c4f86" stroke-width="1.200"/><path d="M3 9h11M3 13h11M3 17h11" stroke="#0e2c50" stroke-width="1.500"/>`),1),
tb(1220,22,`<svg width="22" height="24" viewBox="0 0 16 16" preserveAspectRatio="none"><rect x="4" y="0" width="12" height="16" rx="1" fill="#185c37"/><rect x="10" y="4" width="6" height="4" fill="#107c41"/><rect x="10" y="8" width="6" height="4" fill="#0d5e32"/><rect x="0" y="4" width="9" height="9" rx="1" fill="#0b5a30"/><path d="M2.600 6l3.600 5M6.200 6l-3.600 5" stroke="#fff" stroke-width="1.200"/></svg>`,1)
];
function taskHtml(){
 let icons='',x=0;
 items.forEach((it,i)=>{
  if(i===0){icons+=`<span class="ti" style="width:${it.w}px">${it.inner}</span>`;
    icons+=`<span class="pill" style="margin-left:14px">${sv(17,17,`<circle cx="7" cy="7" r="5.500" fill="none" stroke="#111" stroke-width="1.800"/><path d="M11 11l5 5" stroke="#111" stroke-width="1.800"/>`)}<span>Search</span><span style="flex:1"></span>${sv(46,28,`<path d="M2 16c0-5 5-7 10-6 6-3 16-3 20 0l2 12-4 0-1-4-10 1-1 4-5 0-1-5c-5 0-10 2-10-2z" fill="#4a3a30"/><path d="M4 14h6" stroke="#1d1511"/><ellipse cx="25" cy="25" rx="20" ry="3" fill="#5d7d9a"/><path d="M36 24l2-18M39 24l3-20M42 24l3-14M38 24l-3-10" stroke="#3a7a3a" stroke-width="1.300"/>`)}</span>`;x=918;return}
  icons+=`<span class="ti" style="margin-left:${it.x-x}px;width:${it.w}px">${it.inner}${it.dot?'<i class="dot"></i>':''}</span>`;x=it.x+it.w;
 });
 return `
 <svg class="bg" width="1920" height="45"><filter id="nz" x="0" y="0" width="100%" height="100%"><feTurbulence type="fractalNoise" baseFrequency="0.95" numOctaves="1" seed="4"/><feColorMatrix values="0 0 0 0 .62  0 0 0 0 .70  0 0 0 0 .88  2.600 0 0 0 -.95"/></filter><rect width="1920" height="45" fill="#9bd3d7"/><rect width="1920" height="45" filter="url(#nz)"/></svg>
 <div class="fg">
  <span class="w">${sv(16,22,`<path d="M0 11a8 8 0 0 1 16 0z" fill="#3d9be9"/><path d="M8 10v9a2 2 0 0 1-4 0" fill="none" stroke="#222" stroke-width="1.200"/>`)}<b>3</b></span>
  <span class="wt">Rain<br><span style="color:#333">Wednesday</span></span>
  <span style="flex:none;width:${679-108}px"></span>
  ${icons}
  <span style="flex:none;width:${1772-1242}px"></span>
  <span class="ti" style="width:14px">${sv(12,8,`<path d="M1 7l5-5 5 5" fill="none" stroke="#111" stroke-width="1.400"/>`)}</span>
  <span class="ti" style="margin-left:15px;width:16px">${sv(16,18,`<rect x="1" y="2" width="12" height="11" fill="none" stroke="#111" stroke-width="1.200"/><path d="M4 16h6M7 13v3" stroke="#111" stroke-width="1.200"/><rect x="10" y="0" width="5" height="8" fill="#9bd3d7" stroke="#111"/>`)}</span>
  <span class="ti" style="margin-left:6px;width:16px">${sv(16,14,`<path d="M1 5h3l4-4v12l-4-4H1z" fill="none" stroke="#111" stroke-width="1.100"/><path d="M10.500 4a4 4 0 0 1 0 6M12.500 2a7 7 0 0 1 0 10" fill="none" stroke="#111" stroke-width="1.100"/>`)}</span>
  <span class="clock">11:43 AM<br>3/3/2025</span>
 </div>`;
}
def('x-taskbar',`
:host{display:grid;height:45px;flex:none;overflow:hidden;font-size:12px;color:#111}
.bg,.fg{grid-area:1/1}
.fg{display:flex;align-items:center;padding-left:20px;position:relative}
.w{position:relative;flex:none;width:16px;height:22px;display:flex;margin-top:5px}
.w b{position:absolute;left:9px;top:-11px;width:16px;height:16px;border-radius:50%;background:#c92a1e;color:#eee;font:10px/16px Roboto,sans-serif;text-align:center}
.wt{margin-left:12px;width:60px;flex:none;line-height:15px;white-space:nowrap;font-size:12px}
.ti{flex:none;display:flex;align-items:center;justify-content:center;position:relative}
.dot{position:absolute;left:50%;margin-left:-3px;top:27px;width:6px;height:2.500px;background:#444;border-radius:2px}
.pill{flex:none;width:204px;height:29px;box-sizing:border-box;border-radius:15px;background:#d7fcff;border-bottom:1.500px solid #9aa8c8;display:flex;align-items:center;padding:0 3px 0 10px;gap:8px;font-size:13px;color:#222}
.clock{margin-left:15px;width:48px;flex:none;text-align:right;line-height:15px;white-space:nowrap}
`,taskHtml);
</script>
</body></html>
